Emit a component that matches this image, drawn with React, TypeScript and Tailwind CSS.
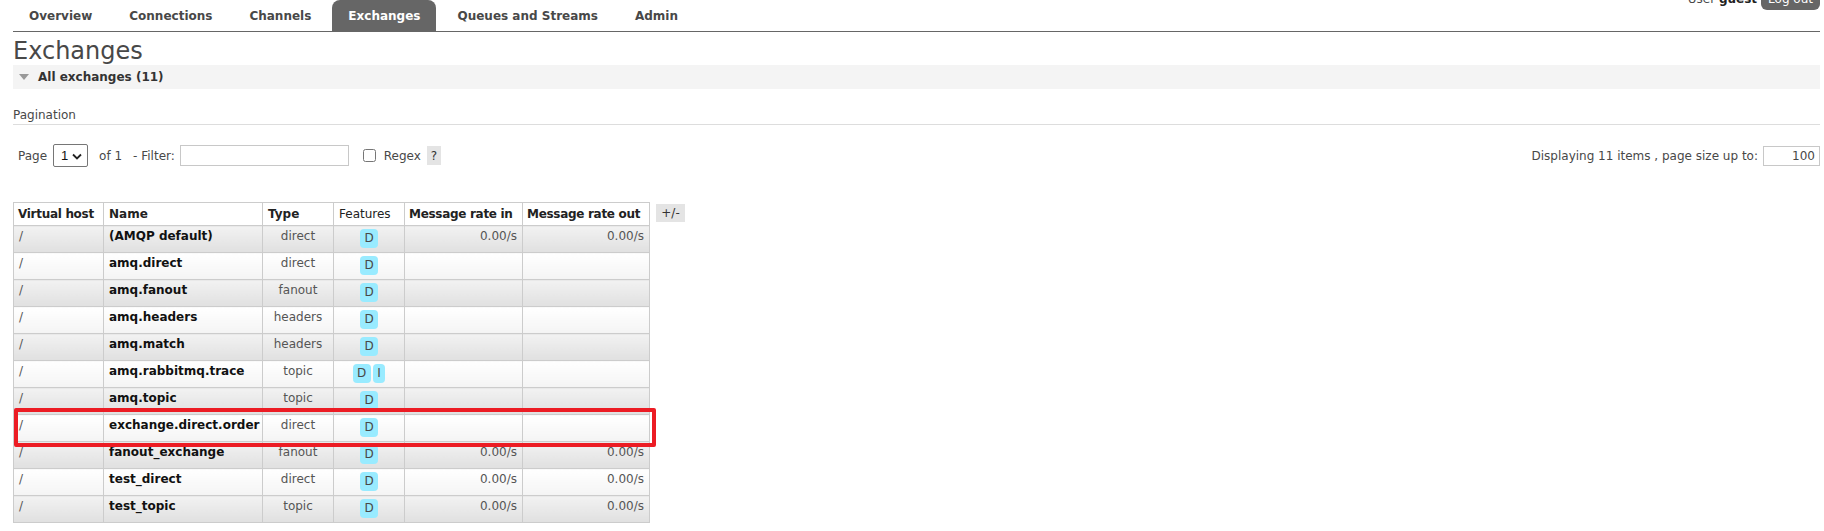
import React from 'react';

type Exchange = {
  vhost: string;
  name: string;
  type: string;
  features: string[];
  rateIn?: string;
  rateOut?: string;
};

const tabs = ['Overview', 'Connections', 'Channels', 'Exchanges', 'Queues and Streams', 'Admin'];

const exchanges: Exchange[] = [
  { vhost: '/', name: '(AMQP default)', type: 'direct', features: ['D'], rateIn: '0.00/s', rateOut: '0.00/s' },
  { vhost: '/', name: 'amq.direct', type: 'direct', features: ['D'] },
  { vhost: '/', name: 'amq.fanout', type: 'fanout', features: ['D'] },
  { vhost: '/', name: 'amq.headers', type: 'headers', features: ['D'] },
  { vhost: '/', name: 'amq.match', type: 'headers', features: ['D'] },
  { vhost: '/', name: 'amq.rabbitmq.trace', type: 'topic', features: ['D', 'I'] },
  { vhost: '/', name: 'amq.topic', type: 'topic', features: ['D'] },
  { vhost: '/', name: 'exchange.direct.order', type: 'direct', features: ['D'] },
  { vhost: '/', name: 'fanout_exchange', type: 'fanout', features: ['D'], rateIn: '0.00/s', rateOut: '0.00/s' },
  { vhost: '/', name: 'test_direct', type: 'direct', features: ['D'], rateIn: '0.00/s', rateOut: '0.00/s' },
  { vhost: '/', name: 'test_topic', type: 'topic', features: ['D'], rateIn: '0.00/s', rateOut: '0.00/s' },
];

const App: React.FC = () => {
  return (
    <div className="min-h-screen bg-white pl-[13px] pr-[4px] font-['DejaVu_Sans',sans-serif] text-[12px] text-[#484848]">
      {/* Top menu */}
      <div className="flex h-[32px] border-b border-[#666]">
        <ul className="flex">
          {tabs.map((tab) => (
            <li
              key={tab}
              className={`mr-[5px] flex h-[31px] items-center rounded-t-[8px] px-[16px] font-bold ${
                tab === 'Exchanges' ? 'bg-[#666] text-white' : 'text-[#484848]'
              }`}
            >
              {tab}
            </li>
          ))}
        </ul>
        <div className="ml-auto -mt-[12px] flex h-[22px] items-center gap-[4px] self-start">
          <span>
            User <b className="text-[#222]">guest</b>
          </span>
          <span className="flex h-[22px] items-center rounded-b-[6px] bg-[#666] px-[7px] text-white">Log out</span>
        </div>
      </div>

      {/* Title */}
      <h1 className="mt-[6px] h-[27px] text-[24px] leading-[27px] text-[#484848]">Exchanges</h1>

      {/* Section header */}
      <div className="flex h-[24px] items-center bg-[#f4f4f4] pl-[6px]">
        <svg width="10" height="6" viewBox="0 0 10 6" className="mr-[9px]">
          <polygon points="0,0 10,0 5,6" fill="#999" />
        </svg>
        <span className="text-[12px] font-bold text-[#333]">All exchanges (11)</span>
      </div>

      {/* Pagination */}
      <div className="mt-[19px] border-b border-[#ddd] pb-[1px] leading-[15px]">Pagination</div>

      <div className="mt-[19px] flex h-[23px] items-center justify-between">
        <div className="flex items-center pl-[5px]">
          <span>Page</span>
          <span className="relative ml-[6px] flex h-[23px] w-[35px] items-center rounded-[2px] border border-[#767676] bg-white">
            <select className="h-full w-full appearance-none bg-transparent pl-[7px] font-['Liberation_Sans',sans-serif] text-[13px] text-[#111] outline-none">
              <option>1</option>
            </select>
            <svg width="10" height="7" viewBox="0 0 10 7" className="pointer-events-none absolute right-[5px] top-[8px]">
              <path d="M1 1.5 L5 5.5 L9 1.5" fill="none" stroke="#222" strokeWidth="1.8" />
            </svg>
          </span>
          <span className="ml-[11px]">of 1</span>
          <span className="ml-[11px]">- Filter:</span>
          <input className="ml-[5px] h-[21px] w-[169px] border border-[#c8c8c8] px-[3px] outline-none" />
          <input type="checkbox" className="ml-[14px] h-[13px] w-[13px]" />
          <span className="ml-[8px]">Regex</span>
          <span className="ml-[6px] flex h-[19px] w-[14px] items-center justify-center bg-[#e4e4e4] text-[#333]">?</span>
        </div>
        <div className="flex items-center">
          <span>Displaying 11 items , page size up to:</span>
          <input
            defaultValue="100"
            className="ml-[5px] h-[20px] w-[57px] border border-[#c8c8c8] pr-[4px] text-right outline-none"
          />
        </div>
      </div>

      {/* Exchanges table */}
      <div className="relative mt-[35px] flex items-start gap-[6px]">
        <table className="w-[636px] table-fixed border-collapse border border-[#ccc]">
          <colgroup>
            <col className="w-[90px]" />
            <col className="w-[159px]" />
            <col className="w-[71px]" />
            <col className="w-[71px]" />
            <col className="w-[118px]" />
            <col className="w-[127px]" />
          </colgroup>
          <thead>
            <tr className="h-[23px] whitespace-nowrap bg-white text-left text-[#222]">
              <th className="border border-[#ccc] px-[4px] font-bold tracking-[-0.3px]">Virtual host</th>
              <th className="border border-[#ccc] px-[5px] font-bold">Name</th>
              <th className="border border-[#ccc] px-[5px] font-bold">Type</th>
              <th className="border border-[#ccc] px-[5px] font-normal">Features</th>
              <th className="border border-[#ccc] px-[4px] font-bold tracking-[-0.3px]">Message rate in</th>
              <th className="border border-[#ccc] px-[4px] font-bold tracking-[-0.3px]">Message rate out</th>
            </tr>
          </thead>
          <tbody>
            {exchanges.map((ex, i) => {
              const bg =
                i % 2 === 0
                  ? 'bg-linear-to-b from-[#f2f2f2] to-[#e0e0e0]'
                  : 'bg-linear-to-b from-white to-[#f4f4f4]';
              const cell = `border border-[#ccc] px-[5px] pt-[3px] pb-[4px] align-top leading-[15px] whitespace-nowrap ${bg}`;
              return (
                <tr key={ex.name} className="h-[27px]">
                  <td className={`${cell} text-[#555]`}>{ex.vhost}</td>
                  <td className={`${cell} font-bold text-[#111]`}>{ex.name}</td>
                  <td className={`${cell} text-center text-[#555]`}>{ex.type}</td>
                  <td className={cell}>
                    <div className="flex justify-center gap-[2px]">
                      {ex.features.map((f) => (
                        <span
                          key={f}
                          className="flex h-[19px] items-center rounded-[4px] bg-[#99ebff] px-[4.5px] text-[#484848]"
                        >
                          {f}
                        </span>
                      ))}
                    </div>
                  </td>
                  <td className={`${cell} text-right text-[#555]`}>{ex.rateIn}</td>
                  <td className={`${cell} text-right text-[#555]`}>{ex.rateOut}</td>
                </tr>
              );
            })}
          </tbody>
        </table>
        <span className="mt-[2px] flex h-[18px] w-[29px] items-center justify-center bg-[#e4e4e4] text-[#333]">+/-</span>

        {/* Highlight annotation */}
        <div className="pointer-events-none absolute left-[1px] top-[206px] h-[39px] w-[642px] rounded-[2px] border-[4px] border-[#ec1c24]" />
      </div>
    </div>
  );
};

export default App;
